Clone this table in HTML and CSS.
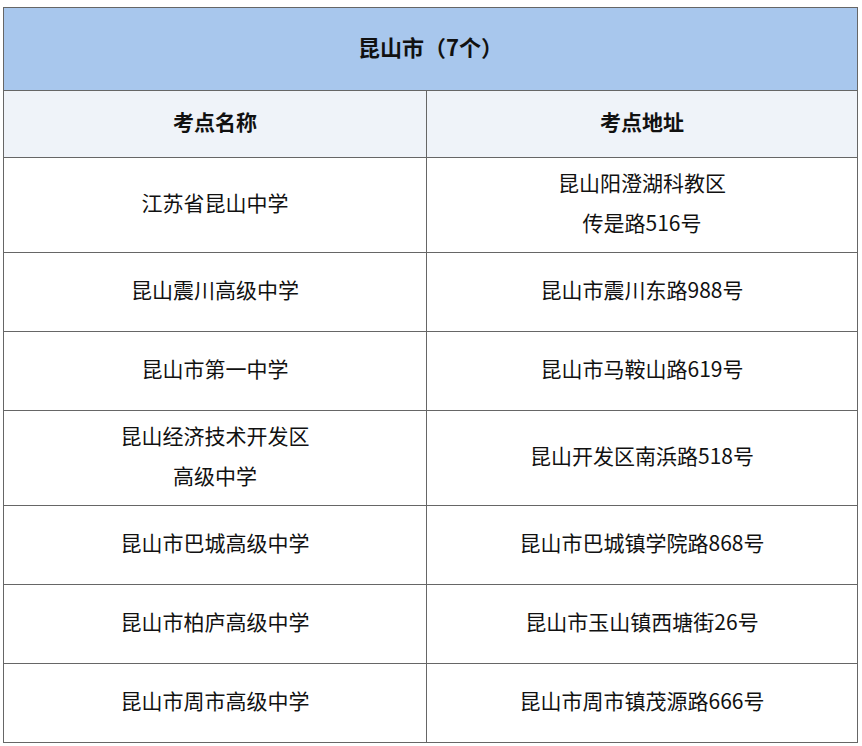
FILE: index.html
```html
<!DOCTYPE html>
<html lang="zh-CN">
<head>
<meta charset="utf-8">
<title>昆山市考点</title>
<link rel="stylesheet" href="styles.css">
</head>
<body>
<table class="sites">
  <colgroup>
    <col class="col-name">
    <col class="col-addr">
  </colgroup>
  <tr class="title-row">
    <th colspan="2">昆山市（7个）</th>
  </tr>
  <tr class="head-row">
    <th>考点名称</th>
    <th>考点地址</th>
  </tr>
  <tr class="row-double">
    <td>江苏省昆山中学</td>
    <td>昆山阳澄湖科教区<br>传是路516号</td>
  </tr>
  <tr class="row-single">
    <td>昆山震川高级中学</td>
    <td>昆山市震川东路988号</td>
  </tr>
  <tr class="row-single">
    <td>昆山市第一中学</td>
    <td>昆山市马鞍山路619号</td>
  </tr>
  <tr class="row-double">
    <td>昆山经济技术开发区<br>高级中学</td>
    <td>昆山开发区南浜路518号</td>
  </tr>
  <tr class="row-single">
    <td>昆山市巴城高级中学</td>
    <td>昆山市巴城镇学院路868号</td>
  </tr>
  <tr class="row-single">
    <td>昆山市柏庐高级中学</td>
    <td>昆山市玉山镇西塘街26号</td>
  </tr>
  <tr class="row-single">
    <td>昆山市周市高级中学</td>
    <td>昆山市周市镇茂源路666号</td>
  </tr>
</table>
</body>
</html>
```

FILE: styles.css
```css
html, body {
  margin: 0;
  padding: 0;
  background: #ffffff;
}

body {
  padding: 7px 5px 0 3px;
  font-family: "Noto Sans CJK SC", "Noto Sans", sans-serif;
  color: #111111;
}

.sites {
  width: 854px;
  border-collapse: collapse;
  table-layout: fixed;
  font-size: 21px;
}

.col-name { width: 423px; }
.col-addr { width: 431px; }

.sites th,
.sites td {
  border: 1.5px solid #666666;
  text-align: center;
  vertical-align: middle;
  padding: 0 0 6px 0;
  line-height: 40px;
}

.title-row {
  height: 83px;
}

.title-row th {
  background: #a8c7ed;
  font-weight: 700;
  font-size: 22px;
}

.head-row {
  height: 67px;
}

.head-row th {
  background: #eff3f9;
  font-weight: 700;
  font-size: 21px;
}

.row-double {
  height: 95px;
}

.row-single {
  height: 79px;
}
```
